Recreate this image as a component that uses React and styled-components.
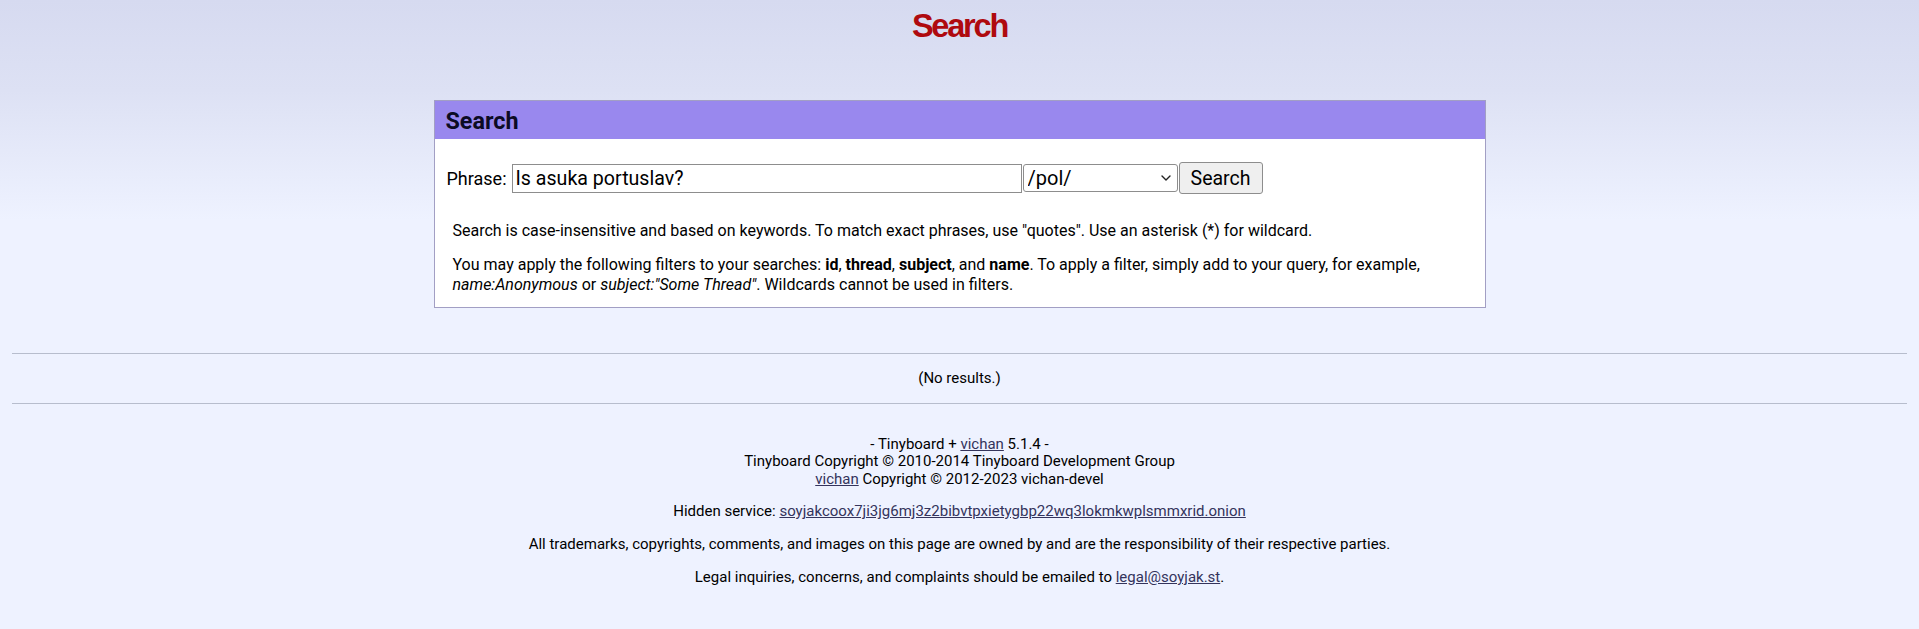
import React from "react";
import styled, { createGlobalStyle } from "styled-components";

const GlobalStyle = createGlobalStyle`
    html, body {
        margin: 0;
        padding: 0;
    }
    body {
        background: #eef2ff linear-gradient(#d6daf0 0, #dde1f4 90px, #eef2ff 220px) no-repeat;
        font-family: Roboto, "Liberation Sans", sans-serif;
        color: #000;
    }
`;

const Page = styled.div`
    padding: 0 12px 40px;
    min-height: 629px;
    box-sizing: border-box;
`;

const Title = styled.h1`
    margin: 0;
    padding-top: 8px;
    text-align: center;
    font-family: "Liberation Sans", Arial, sans-serif;
    font-weight: bold;
    font-size: 32.5px;
    letter-spacing: -2.2px;
    color: #af0a0f;
`;

const Ban = styled.div`
    width: 1052px;
    box-sizing: border-box;
    margin: 55px auto 0;
    background: #fff;
    border: 1px solid #a29fc4;
`;

const BanTitle = styled.h2`
    margin: 0;
    padding: 6px 11px 4px;
    background: #9988ee;
    font-size: 23.33px;
    font-weight: bold;
    color: #0c0b24;
`;

const SearchRow = styled.form`
    display: flex;
    align-items: center;
    padding: 23px 12px 0;
`;

const Label = styled.label`
    font-size: 18px;
    margin-right: 5px;
`;

const Input = styled.input`
    width: 510px;
    height: 29px;
    box-sizing: border-box;
    padding: 0 3px;
    border: 1px solid #8d8d8d;
    border-radius: 0;
    font-family: Roboto, sans-serif;
    font-size: 19.6px;
    color: #000;
`;

const SelectWrap = styled.div`
    position: relative;
    margin-left: 1px;
    height: 28px;
`;

const Select = styled.select`
    appearance: none;
    -webkit-appearance: none;
    width: 155px;
    height: 28px;
    box-sizing: border-box;
    padding: 0 22px 0 4px;
    border: 1px solid #8d8d8d;
    border-radius: 3px;
    background: #fff;
    font-family: Roboto, sans-serif;
    font-size: 20px;
    color: #000;
`;

const Chevron = styled.svg`
    position: absolute;
    right: 7px;
    top: 11px;
    width: 10px;
    height: 6px;
    pointer-events: none;
`;

const Button = styled.button`
    width: 84px;
    height: 32px;
    box-sizing: border-box;
    margin-left: 1px;
    padding: 0;
    border: 1px solid #8d8d8d;
    border-radius: 3px;
    background: #efefef;
    font-family: Roboto, sans-serif;
    font-size: 19.5px;
    color: #000;
    cursor: pointer;
`;

const Notes = styled.div`
    padding: 27px 18px 12px;
    font-size: 16px;
    line-height: 20px;
`;

const Note = styled.p`
    margin: 0;
    & + & {
        margin-top: 14px;
    }
`;

const Rule = styled.hr`
    margin: 0;
    border: none;
    border-top: 1px solid #b7bdcd;
    height: 0;
`;

const Results = styled.div`
    margin-top: 45px;
`;

const NoResults = styled.p`
    margin: 15px 0 16px;
    text-align: center;
    font-size: 15px;
`;

const Footer = styled.footer`
    margin-top: 32px;
`;

const FooterText = styled.p`
    margin: 0 0 15.5px;
    text-align: center;
    font-size: 15px;
    line-height: 17.3px;
`;

const Link = styled.a`
    color: #34345c;
    text-decoration: underline;
`;

const App = () => {
    return (
        <>
            <GlobalStyle />
            <Page>
                <Title>Search</Title>

                <Ban>
                    <BanTitle>Search</BanTitle>
                    <SearchRow onSubmit={(e) => e.preventDefault()}>
                        <Label htmlFor="search">Phrase:</Label>
                        <Input id="search" type="text" name="search" defaultValue="Is asuka portuslav?" />
                        <SelectWrap>
                            <Select name="board" defaultValue="pol">
                                <option value="">All boards</option>
                                <option value="soy">/soy/</option>
                                <option value="pol">/pol/</option>
                                <option value="qa">/qa/</option>
                            </Select>
                            <Chevron viewBox="0 0 10 6">
                                <path d="M1 1l4 4 4-4" fill="none" stroke="#222" strokeWidth="1.4" strokeLinecap="round" strokeLinejoin="round" />
                            </Chevron>
                        </SelectWrap>
                        <Button type="submit">Search</Button>
                    </SearchRow>
                    <Notes>
                        <Note>
                            Search is case-insensitive and based on keywords. To match exact phrases, use "quotes". Use an asterisk (*) for wildcard.
                        </Note>
                        <Note>
                            You may apply the following filters to your searches: <b>id</b>, <b>thread</b>, <b>subject</b>, and <b>name</b>. To apply a filter, simply add to your query, for example, <i>name:Anonymous</i> or <i>subject:"Some Thread"</i>. Wildcards cannot be used in filters.
                        </Note>
                    </Notes>
                </Ban>

                <Results>
                    <Rule />
                    <NoResults>(No results.)</NoResults>
                    <Rule />
                </Results>

                <Footer>
                    <FooterText>
                        - Tinyboard + <Link href="#">vichan</Link> 5.1.4 -
                        <br />
                        Tinyboard Copyright © 2010-2014 Tinyboard Development Group
                        <br />
                        <Link href="#">vichan</Link> Copyright © 2012-2023 vichan-devel
                    </FooterText>
                    <FooterText>
                        Hidden service: <Link href="#">soyjakcoox7ji3jg6mj3z2bibvtpxietygbp22wq3lokmkwplsmmxrid.onion</Link>
                    </FooterText>
                    <FooterText>
                        All trademarks, copyrights, comments, and images on this page are owned by and are the responsibility of their respective parties.
                    </FooterText>
                    <FooterText>
                        Legal inquiries, concerns, and complaints should be emailed to <Link href="#">legal@soyjak.st</Link>.
                    </FooterText>
                </Footer>
            </Page>
        </>
    );
};

export default App;
